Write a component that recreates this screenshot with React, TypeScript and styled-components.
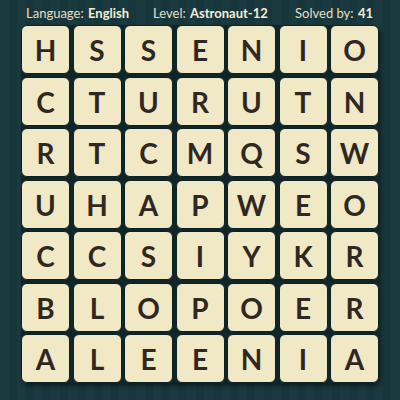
import React from "react";
import styled, { createGlobalStyle } from "styled-components";

const rows = [
  "HSSENIO",
  "CTURUTN",
  "RTCMQSW",
  "UHAPWEO",
  "CCSIYKR",
  "BLOPOER",
  "ALEENIA",
];

const GlobalStyle = createGlobalStyle`
  html, body {
    margin: 0;
    padding: 0;
  }
  body {
    width: 400px;
    height: 400px;
    overflow: hidden;
    font-family: Lato, "Open Sans", sans-serif;
  }
`;

export default function App() {
  return (
    <>
      <GlobalStyle />
      <Page>
        <Header>
          <Info>
            Language: <strong>English</strong>
          </Info>
          <Info>
            Level: <strong>Astronaut-12</strong>
          </Info>
          <Solved>
            Solved by: <strong>41</strong>
          </Solved>
        </Header>
        <Board>
          {rows.map((row, r) =>
            row.split("").map((ch, c) => <Tile key={`${r}-${c}`}>{ch}</Tile>)
          )}
        </Board>
      </Page>
    </>
  );
}

const Page = styled.div`
  width: 400px;
  height: 400px;
  box-sizing: border-box;
  padding: 3px 21px 0 21px;
  background: repeating-linear-gradient(
    90deg,
    #1a3a3f 0px,
    #1a3a3f 9px,
    #17363b 9px,
    #17363b 17px
  );
`;

const Header = styled.div`
  display: flex;
  align-items: center;
  gap: 24px;
  height: 20px;
  padding: 0 6px 0 5px;
`;

const Info = styled.div`
  flex: none;
  white-space: nowrap;
  color: #e4dfc6;
  font-size: 13px;

  strong {
    font-weight: 700;
    color: #f2eed8;
    margin-left: 1px;
  }
`;

const Solved = styled(Info)`
  margin-left: auto;
`;

const Board = styled.div`
  margin-top: 2px;
  display: grid;
  grid-template-columns: repeat(7, 49px);
  grid-auto-rows: 49px;
  gap: 2.5px;
  width: 358px;
  background: #0f2528;
  border-radius: 6px;
  box-shadow: 2px 3px 4px rgba(0, 0, 0, 0.45);
`;

const Tile = styled.div`
  display: flex;
  align-items: center;
  justify-content: center;
  box-sizing: border-box;
  background: #f1e9c6;
  border: 1px solid #0d2124;
  border-radius: 6px;
  color: #2f2822;
  font-family: Lato, "Open Sans", sans-serif;
  font-weight: 700;
  font-size: 28px;
  line-height: 1;
  padding-top: 1px;
`;
